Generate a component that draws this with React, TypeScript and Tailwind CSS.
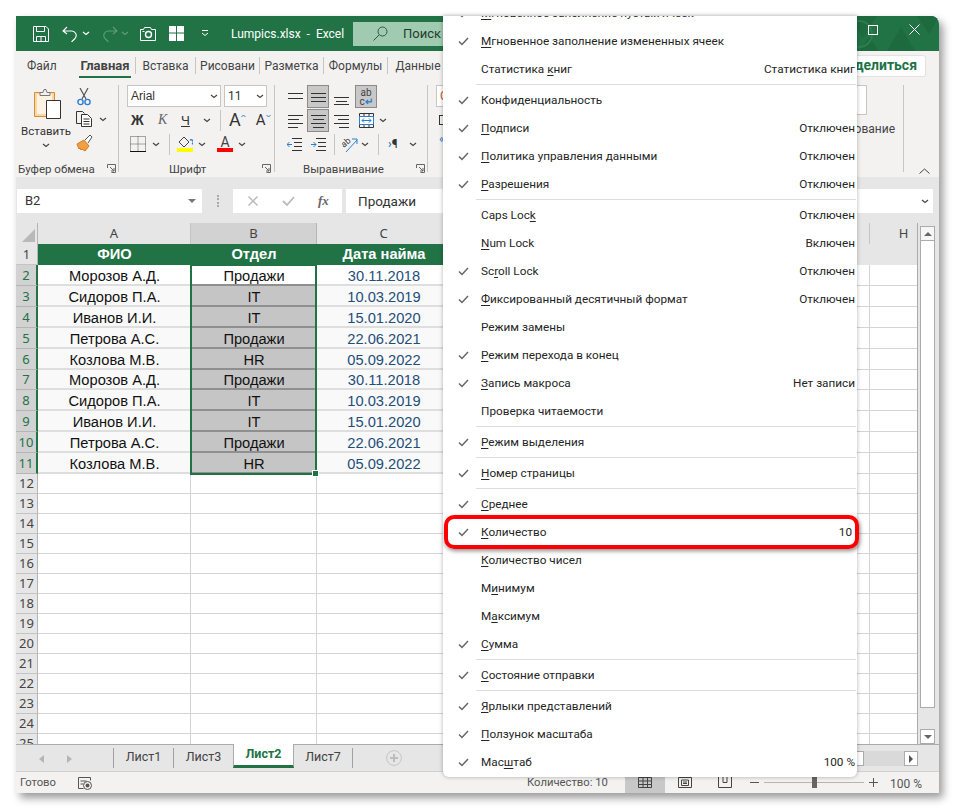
import type { ReactNode } from 'react';

const menuRows: (
  | { sep: true }
  | { sep?: false; on: boolean; a?: string; u?: string; b?: string; val?: string; pr?: string }
)[] = [
  { on: true, u: 'М', b: 'гновенное заполнение пустых ячеек' },
  { on: true, u: 'М', b: 'гновенное заполнение измененных ячеек' },
  { on: false, a: 'Статистика ', u: 'к', b: 'ниг', val: 'Статистика книг' },
  { sep: true },
  { on: true, a: 'Конфиденциальность' },
  { on: true, u: 'П', b: 'одписи', val: 'Отключен' },
  { on: true, u: 'П', b: 'олитика управления данными', val: 'Отключен' },
  { on: true, u: 'Р', b: 'азрешения', val: 'Отключен' },
  { sep: true },
  { on: false, a: 'Caps Loc', u: 'k', val: 'Отключен' },
  { on: false, u: 'N', b: 'um Lock', val: 'Включен' },
  { on: true, a: 'Sc', u: 'r', b: 'oll Lock', val: 'Отключен' },
  { on: true, u: 'Ф', b: 'иксированный десятичный формат', val: 'Отключен' },
  { on: false, a: 'Режим замены' },
  { on: true, u: 'Р', b: 'ежим перехода в конец' },
  { on: true, u: 'З', b: 'апись макроса', val: 'Нет записи' },
  { on: false, a: 'Проверка читаемости' },
  { sep: true },
  { on: true, u: 'Р', b: 'ежим выделения' },
  { sep: true },
  { on: true, u: 'Н', b: 'омер страницы' },
  { sep: true },
  { on: true, u: 'С', b: 'реднее' },
  { on: true, u: 'К', b: 'оличество', val: '10', pr: 'pr-[5px]' },
  { on: false, u: 'К', b: 'оличество чисел' },
  { on: false, a: 'М', u: 'и', b: 'нимум' },
  { on: false, a: 'М', u: 'а', b: 'ксимум' },
  { on: true, u: 'С', b: 'умма' },
  { sep: true },
  { on: true, u: 'С', b: 'остояние отправки' },
  { sep: true },
  { on: true, u: 'Я', b: 'рлыки представлений' },
  { on: true, u: 'П', b: 'олзунок масштаба' },
  { on: true, a: 'Мас', u: 'ш', b: 'таб', val: '100 %' },
];

const people = [
  ['Морозов А.Д.', 'Продажи', '30.11.2018'],
  ['Сидоров П.А.', 'IT', '10.03.2019'],
  ['Иванов И.И.', 'IT', '15.01.2020'],
  ['Петрова А.С.', 'Продажи', '22.06.2021'],
  ['Козлова М.В.', 'HR', '05.09.2022'],
  ['Морозов А.Д.', 'Продажи', '30.11.2018'],
  ['Сидоров П.А.', 'IT', '10.03.2019'],
  ['Иванов И.И.', 'IT', '15.01.2020'],
  ['Петрова А.С.', 'Продажи', '22.06.2021'],
  ['Козлова М.В.', 'HR', '05.09.2022'],
];

const emptyRows = Array.from({ length: 14 }, (_, i) => i + 12);

function Chevron({ className = 'ml-[4px]', color = '#444' }: { className?: string; color?: string }) {
  return (
    <svg width="8" height="5" viewBox="0 0 8 5" className={`block shrink-0 ${className}`}>
      <path d="M1 1l3 2.500L7 1" fill="none" stroke={color} strokeWidth="1.200" />
    </svg>
  );
}

function Lines({ w, stroke = '#333', d }: { w: number; stroke?: string; d: string }) {
  return (
    <svg width={w} height="16" viewBox={`0 0 ${w} 16`} className="block shrink-0">
      <path d={d} fill="none" stroke={stroke} strokeWidth="1" />
    </svg>
  );
}

function AlignCell({ active, children, className = '' }: { active?: boolean; children: ReactNode; className?: string }) {
  return (
    <div
      className={`w-[22px] h-[23px] flex items-center justify-center shrink-0 ${
        active ? 'bg-[#c8c8c8] border border-[#8a8a8a]' : ''
      } ${className}`}
    >
      {children}
    </div>
  );
}

function Launcher({ className = '' }: { className?: string }) {
  return (
    <svg width="9" height="9" viewBox="0 0 9 9" className={`block shrink-0 ${className}`}>
      <path d="M.5 4V.5h8v8H4.500M3 3l4 4M4 7h3V4" fill="none" stroke="#666" strokeWidth="1" />
    </svg>
  );
}

function VSep({ className = '' }: { className?: string }) {
  return <div className={`w-px bg-[#c8c6c4] shrink-0 ${className}`} />;
}

function TitleBar() {
  return (
    <div className="h-[35px] bg-[#217346] flex items-center shrink-0 rounded-tr-lg relative overflow-hidden">
      <svg width="16" height="16" viewBox="0 0 16 16" className="block shrink-0 ml-[17px]">
        <path d="M.5.5h12.500l2.500 2.500v12.500H.5zM3.500.5v5h8v-5M3.500 15.500v-5h9v5M8 11v4.500" fill="none" stroke="#fff" />
      </svg>
      <svg width="16" height="16" viewBox="0 0 16 16" className="block shrink-0 ml-[13px]">
        <path d="M5 1L1 5l4 3M1 5h9a4.500 4.500 0 0 1 3 7.500L9.500 16" fill="none" stroke="#fff" strokeWidth="1.100" />
      </svg>
      <Chevron color="#fff" />
      <svg width="16" height="16" viewBox="0 0 16 16" className="block shrink-0 ml-[12px]">
        <path d="M11 1l4 4-4 3M15 5H6a4.500 4.500 0 0 0-3 7.500L6.500 16" fill="none" stroke="#5f9c7a" strokeWidth="1.100" />
      </svg>
      <Chevron className="ml-[3px]" color="#5f9c7a" />
      <svg width="16" height="14" viewBox="0 0 16 14" className="block shrink-0 ml-[11px]">
        <path d="M.5 2.500h3l1-2h6l1 2h4v11H.5z" fill="none" stroke="#fff" />
        <circle cx="8.500" cy="7.500" r="3" fill="none" stroke="#fff" strokeWidth="1.400" />
        <path d="M2.500 4.500h2" stroke="#fff" />
      </svg>
      <svg width="15" height="15" viewBox="0 0 15 15" className="block shrink-0 ml-[13px]">
        <path d="M0 0h7v6.500H0zM8 0h7v6.500H8zM0 7.500h7V15H0zM8 7.500h7V15H8z" fill="#fff" />
      </svg>
      <svg width="8" height="7" viewBox="0 0 8 7" className="block shrink-0 ml-[17px]">
        <path d="M1 .5h6M1 3l3 2.500L7 3" fill="none" stroke="#fff" />
      </svg>
      <span className="ml-[22px] w-[110px] text-[12px] text-white whitespace-pre">Lumpics.xlsx  -  Excel</span>
      <div className="ml-[12px] h-[24px] w-[300px] bg-[#a0cbb0] flex items-center shrink-0">
        <svg width="15" height="15" viewBox="0 0 15 15" className="block shrink-0 ml-[20px]">
          <circle cx="9.500" cy="5.500" r="4.500" fill="none" stroke="#2d5a40" />
          <path d="M6 9l-5.500 5.500" stroke="#2d5a40" />
        </svg>
        <span className="ml-[15px] text-[13px] text-[#1f3d2c]">Поиск</span>
      </div>
      <div className="absolute right-0 top-0 h-[35px] w-[110px]">
        <svg width="110" height="35" viewBox="0 0 110 35" className="block">
          <path d="M20 0l14 22L48 0zM58 35l14-24 14 24zM88 0l12 18L110 0zM30 35l10-14 10 14z" fill="#1c6a3e" />
          <circle cx="30" cy="18" r="13" fill="none" stroke="#2c7d50" strokeWidth="2" />
        </svg>
      </div>
      <div className="absolute right-[19px] top-[8px] flex items-center gap-[31px]">
        <div className="w-[10px] h-[10px] border border-white" />
        <svg width="11" height="11" viewBox="0 0 11 11" className="block">
          <path d="M.5.5l10 10M10.500.5l-10 10" stroke="#fff" />
        </svg>
      </div>
    </div>
  );
}

function TabsRow() {
  return (
    <div className="h-[29px] bg-[#f3f2f1] flex items-center shrink-0 text-[12px] text-[#444] relative">
      <span className="ml-[11px] w-[52px]">Файл</span>
      <div className="w-[52px] h-[29px] flex items-center justify-center relative font-bold text-[13px] text-[#444]">
        Главная
        <div className="absolute left-0 right-0 bottom-[2px] h-[2px] bg-[#217346]" />
      </div>
      <VSep className="ml-[4px] h-[17px]" />
      <span className="w-[59px] text-center">Вставка</span>
      <VSep className="h-[17px]" />
      <span className="w-[63px] text-center">Рисовани</span>
      <VSep className="h-[17px]" />
      <span className="w-[63px] text-center">Разметка</span>
      <VSep className="h-[17px]" />
      <span className="w-[63px] text-center">Формулы</span>
      <VSep className="h-[17px]" />
      <span className="w-[60px] text-center">Данные</span>
      <div className="ml-auto mr-[13px] w-[100px] h-[22px] bg-white rounded-[3px] border border-[#e3e2e0] flex items-center justify-end pr-[8px] text-[14px] font-bold text-[#217346]">
        Поделиться
      </div>
    </div>
  );
}

function GroupLabel({ text, className }: { text: string; className: string }) {
  return <span className={`absolute bottom-0 text-[11.5px] leading-[16px] text-[#444] ${className}`}>{text}</span>;
}

function Ribbon() {
  return (
    <div className="h-[97px] bg-[#f3f2f1] flex shrink-0 text-[#333]">
      {/* буфер обмена */}
      <div className="w-[102px] relative flex shrink-0">
        <div className="w-[60px] flex flex-col items-center pt-[9px]">
          <svg width="28" height="30" viewBox="0 0 28 30" className="block shrink-0 ml-[4px]">
            <path d="M.5 3.500h20v24H.5z" fill="#f6d9a8" stroke="#e08a2c" />
            <path d="M3 5h15v20H3z" fill="#fdf3e2" />
            <path d="M6 3.500h3l1-3h2l1 3h3v3H6z" fill="#f3f2f1" stroke="#777" />
            <path d="M12.500 11.500h14v18h-14z" fill="#fff" stroke="#333" />
          </svg>
          <span className="mt-[3px] text-[11.5px] leading-[18px] text-[#333] whitespace-nowrap">Вставить</span>
          <Chevron className="mt-[3px]" />
        </div>
        <div className="flex flex-col pt-[8px] ml-[0px]">
          <svg width="14" height="18" viewBox="0 0 14 18" className="block ml-[1px]">
            <path d="M3 0l6 11M11 0L5 11" stroke="#555" strokeWidth="1.200" />
            <circle cx="3.500" cy="14" r="2.600" fill="none" stroke="#2a7fd0" strokeWidth="1.400" />
            <circle cx="10.500" cy="14" r="2.600" fill="none" stroke="#2a7fd0" strokeWidth="1.400" />
          </svg>
          <div className="flex items-center mt-[5px]">
            <svg width="17" height="16" viewBox="0 0 17 16" className="block shrink-0">
              <path d="M5.500 12.500H.5V.5h6l2 2" fill="none" stroke="#333" />
              <path d="M5.500 3.500h6l4 4v8h-10zM7.500 8h6M7.500 10.500h6M7.500 13h6" fill="#fff" stroke="#333" />
            </svg>
            <Chevron className="ml-[6px]" />
          </div>
          <svg width="17" height="17" viewBox="0 0 17 17" className="block mt-[8px]">
            <path d="M1 9l7-4 5 6-4 5-3-2-1 1-1-2-1 1z" fill="#f0a040" stroke="#d9781f" />
            <path d="M9 5l5-5 2 2-4 6" fill="#fff" stroke="#555" />
          </svg>
        </div>
        <GroupLabel text="Буфер обмена" className="left-[2px]" />
        <Launcher className="absolute left-[91px] bottom-[4px]" />
      </div>
      <VSep className="h-[87px] mt-[5px]" />
      {/* шрифт */}
      <div className="w-[155px] relative flex flex-col shrink-0 pt-[5px]">
        <div className="flex ml-[8px]">
          <div className="w-[94px] h-[22px] bg-white border border-[#c6c6c6] flex items-center pl-[3px] font-['Liberation_Sans',Arial,sans-serif] text-[12px]">
            Arial
            <Chevron className="ml-auto mr-[2px]" />
          </div>
          <div className="ml-[3px] w-[43px] h-[22px] bg-white border border-[#c6c6c6] flex items-center pl-[3px] text-[12px]">
            11
            <Chevron className="ml-auto mr-[2px]" />
          </div>
        </div>
        <div className="flex items-center h-[22px] mt-[2px] ml-[12px]">
          <span className="w-[15px] text-[14px] font-extrabold font-['Liberation_Sans',Arial,sans-serif] leading-none">Ж</span>
          <span className="ml-[12px] w-[10px] text-[14px] italic text-[#666] font-['Liberation_Serif',serif] leading-none">К</span>
          <span className="ml-[13px] w-[10px] text-[13px] underline leading-none">Ч</span>
          <Chevron className="ml-[12px]" />
          <VSep className="ml-[9px] h-[21px]" />
          <span className="ml-[8px] text-[18px] leading-none">A</span>
          <svg width="5" height="4" viewBox="0 0 5 4" className="block mb-[8px]">
            <path d="M.5 3l2-2 2 2" fill="none" stroke="#2a7fd0" />
          </svg>
          <span className="ml-[10px] text-[15px] leading-none">A</span>
          <svg width="5" height="4" viewBox="0 0 5 4" className="block mb-[8px]">
            <path d="M.5 1l2 2 2-2" fill="none" stroke="#2a7fd0" />
          </svg>
        </div>
        <div className="flex items-center h-[22px] mt-[2px] ml-[11px]">
          <svg width="16" height="16" viewBox="0 0 16 16" className="block shrink-0">
            <path d="M.5.500h15v15h-15zM8 .5v15M.5 8h15" fill="none" stroke="#555" strokeDasharray="1 1" />
            <path d="M0 15.500h16" stroke="#111" />
          </svg>
          <Chevron className="ml-[6px]" />
          <VSep className="ml-[9px] h-[21px]" />
          <div className="ml-[7px] w-[16px] flex flex-col items-center">
            <svg width="16" height="12" viewBox="0 0 16 12" className="block">
              <path d="M2 6l5-5 5 5-5 5z" fill="none" stroke="#444" />
              <path d="M13 4a2 2 0 0 1 2 4" fill="none" stroke="#2a7fd0" strokeWidth="1.400" />
            </svg>
            <div className="w-[16px] h-[4px] bg-[#ffff00]" />
          </div>
          <Chevron className="ml-[5px]" />
          <div className="ml-[11px] w-[16px] flex flex-col items-center">
            <span className="text-[14px] leading-[12px] h-[12px] text-[#444]">A</span>
            <div className="w-[16px] h-[4px] bg-[#ff0000]" />
          </div>
          <Chevron className="ml-[5px]" />
        </div>
        <GroupLabel text="Шрифт" className="left-[50px]" />
        <Launcher className="absolute left-[143px] bottom-[4px]" />
      </div>
      <VSep className="h-[87px] mt-[5px]" />
      {/* выравнивание */}
      <div className="w-[152px] relative flex flex-col shrink-0 pt-[5px]">
        <div className="flex ml-[9px]">
          <AlignCell><Lines w={15} d="M0 4.500h15M0 9.500h15" /></AlignCell>
          <AlignCell active className="ml-[1px]"><Lines w={15} d="M0 4.500h15M0 8.500h15M0 12.500h15" /></AlignCell>
          <AlignCell className="ml-[1px]"><Lines w={15} d="M0 8.500h15M2 12.500h11M0 15.500h15" /></AlignCell>
          <AlignCell active className="ml-[3px]">
            <span className="text-[10px] leading-[9px] text-[#444] text-center relative">
              ab
              <br />c<span className="text-[#2a7fd0] font-bold">↵</span>
            </span>
          </AlignCell>
        </div>
        <div className="flex ml-[9px] mt-[1px]">
          <AlignCell><Lines w={15} d="M0 2.500h15M0 6.500h11M0 10.500h15M0 14.500h10" /></AlignCell>
          <AlignCell active className="ml-[1px]"><Lines w={15} d="M0 2.500h15M2 6.500h11M0 10.500h15M2 14.500h11" /></AlignCell>
          <AlignCell className="ml-[1px]"><Lines w={15} d="M0 2.500h15M4 6.500h11M0 10.500h15M5 14.500h10" /></AlignCell>
          <AlignCell className="ml-[3px]">
            <svg width="15" height="15" viewBox="0 0 15 15" className="block">
              <path d="M.5.500h14v14H.5zM5 .5v3M10 .5v3M5 11v3.500M10 11v3.500" fill="none" stroke="#333" />
              <path d="M.5 3.500h14v8H.5z" fill="#fff" stroke="#2a7fd0" />
              <path d="M3 7.500h9M5 5.500l-2 2 2 2M10 5.500l2 2-2 2" fill="none" stroke="#2a7fd0" />
            </svg>
          </AlignCell>
          <Chevron className="ml-[2px] self-center" />
        </div>
        <div className="flex items-center h-[22px] mt-[1px] ml-[12px]">
          <svg width="15" height="16" viewBox="0 0 15 16" className="block shrink-0">
            <path d="M5 2.500h10M7 6.500h8M7 10.500h8M5 14.500h10" fill="none" stroke="#333" />
            <path d="M5 8.500H0M2.500 6L0 8.500 2.500 11" fill="none" stroke="#2a7fd0" />
          </svg>
          <span className="ml-[9px]">
            <svg width="15" height="16" viewBox="0 0 15 16" className="block shrink-0">
              <path d="M5 2.500h10M7 6.500h8M7 10.500h8M5 14.500h10" fill="none" stroke="#333" />
              <path d="M0 8.500h5M2.500 6L5 8.500 2.500 11" fill="none" stroke="#2a7fd0" />
            </svg>
          </span>
          <VSep className="ml-[8px] h-[21px]" />
          <svg width="17" height="17" viewBox="0 0 17 17" className="block shrink-0 ml-[7px]">
            <text x="0" y="9" fontSize="9" fill="#444" transform="rotate(-40 5 8)">ab</text>
            <path d="M4 16L15 4M10 3h5v5" fill="none" stroke="#2a7fd0" />
          </svg>
          <Chevron className="ml-[2px]" />
          <VSep className="ml-[9px] h-[21px]" />
          <span className="ml-[9px] w-[16px] text-[12px] leading-none text-[#333]">
            <span className="text-[#2a7fd0] font-bold">›</span>¶
          </span>
          <Chevron className="ml-[5px]" />
        </div>
        <GroupLabel text="Выравнивание" className="left-[28px]" />
        <Launcher className="absolute left-[141px] bottom-[4px]" />
      </div>
      <VSep className="h-[87px] mt-[5px]" />
      {/* число и то, что спрятано под меню */}
      <div className="w-[475px] flex shrink-0 pt-[5px]">
        <div className="ml-[8px] w-[80px] flex flex-col">
          <div className="h-[22px] bg-white border border-[#c6c6c6] pl-[3px] text-[12px] text-[#c25b12] leading-[20px]">О</div>
          <div className="w-[10px] h-[10px] border border-[#333] ml-[3px] mt-[8px]" />
          <span className="ml-[3px] mt-[8px] text-[12px] text-[#2a7fd0] leading-none">«</span>
        </div>
        <div className="ml-auto mr-[8px] flex flex-col items-end">
          <div className="w-[100px] h-[30px] bg-white border border-[#c6c6c6] mr-[28px]" />
          <span className="mt-[5px] text-[12px] text-[#444]">Форматирование</span>
        </div>
      </div>
      <VSep className="h-[87px] mt-[5px]" />
      <div className="flex-1 flex items-end justify-end pr-[9px] pb-[3px]">
        <svg width="11" height="6" viewBox="0 0 11 6" className="block">
          <path d="M.5 5.500l5-4.500 5 4.500" fill="none" stroke="#444" />
        </svg>
      </div>
    </div>
  );
}

function FormulaBar() {
  return (
    <div className="h-[46px] bg-[#e6e6e6] flex pt-[12px] shrink-0 text-[13px] text-[#333]">
      <div className="ml-[1px] w-[185px] h-[24px] bg-white flex items-center pl-[8px]">
        B2
        <svg width="8" height="4" viewBox="0 0 8 4" className="block ml-auto mr-[6px]">
          <path d="M0 0h8L4 4z" fill="#777" />
        </svg>
      </div>
      <div className="ml-[15px] w-[2px] h-[12px] mt-[6px] border-l-2 border-dotted border-[#aaa]" />
      <div className="ml-[14px] w-[109px] h-[24px] bg-white flex items-center">
        <svg width="10" height="10" viewBox="0 0 10 10" className="block ml-[15px]">
          <path d="M.5.500l9 9M9.500.500l-9 9" stroke="#bbb" strokeWidth="1.500" />
        </svg>
        <svg width="13" height="10" viewBox="0 0 13 10" className="block ml-[24px]">
          <path d="M1 5l4 4 7-8" fill="none" stroke="#bbb" strokeWidth="1.800" />
        </svg>
        <span className="ml-[23px] text-[13px] italic font-bold font-['Liberation_Serif',serif] text-[#666]">fx</span>
      </div>
      <div className="ml-[4px] w-[587px] h-[24px] bg-white flex items-center pl-[12px] text-[13.5px]">
        Продажи
        <Chevron className="ml-auto mr-[4px]" />
      </div>
    </div>
  );
}

function RowHead({ n, selected, h }: { n: number; selected?: boolean; h: string }) {
  return (
    <div
      className={`w-[22px] ${h} shrink-0 flex items-center justify-center pt-px text-[13px] border-b font-['Noto_Sans',sans-serif] ${
        selected
          ? 'bg-[#d2d2d2] border-b-[#b5b5b5] border-r-2 border-r-[#217346] text-[#217346]'
          : 'bg-[#e6e6e6] border-b-[#c4c4c4] border-r border-r-[#b5b5b5] text-[#444]'
      }`}
    >
      {n}
    </div>
  );
}

function Sheet() {
  const gridCell = 'border-r border-b border-[#d4d4d4] shrink-0';
  const headCell = 'shrink-0 bg-[#217346] text-white font-bold flex items-center justify-center pb-[2px]';
  return (
    <div className="h-[521px] flex shrink-0 bg-[#e6e6e6]">
      <div className="w-[902px] shrink-0 flex flex-col overflow-hidden border-r border-[#ababab]">
        {/* заголовки столбцов */}
        <div className="flex h-[21px] shrink-0 text-[13px] text-[#444] font-['Noto_Sans',sans-serif]">
          <div className="w-[22px] bg-[#e6e6e6] border-r border-[#b5b5b5] flex items-end justify-end p-[2px]">
            <svg width="13" height="13" viewBox="0 0 13 13" className="block">
              <path d="M13 0v13H0z" fill="#b9b9b9" />
            </svg>
          </div>
          <div className="w-[153px] bg-[#e6e6e6] border-r border-[#c4c4c4] flex items-center justify-center">A</div>
          <div className="w-[126px] bg-[#d2d2d2] border-r border-[#b5b5b5] flex items-center justify-center">B</div>
          <div className="w-[134px] bg-[#e6e6e6] border-r border-[#c4c4c4] flex items-center justify-center">C</div>
          <div className="w-[419px] bg-[#e6e6e6] border-r border-[#c4c4c4]" />
          <div className="w-[47px] bg-[#e6e6e6] flex items-center justify-center pl-[20px]">H</div>
        </div>
        <div className="relative flex-1 overflow-hidden font-['Liberation_Sans',Arial,sans-serif] text-[14.67px] text-[#111]">
          <div className="flex h-[21px]">
            <RowHead n={1} h="h-[21px]" />
            <div className={`w-[153px] ${headCell}`}>ФИО</div>
            <div className={`w-[126px] ${headCell}`}>Отдел</div>
            <div className={`w-[134px] ${headCell}`}>Дата найма</div>
          </div>
          {people.map((p, i) => {
            const h = i === 5 ? 'h-[20px]' : 'h-[21px]';
            return (
              <div key={i} className={`flex ${h}`}>
                <RowHead n={i + 2} selected h={h} />
                <div className={`w-[153px] shrink-0 flex items-center justify-center pt-[2px] border-b-2 border-[#dedede] ${i === 0 ? 'bg-white' : 'bg-[#f9f9f9]'}`}>
                  {p[0]}
                </div>
                <div className={`w-[126px] shrink-0 flex items-center justify-center pt-[2px] border-b-2 ${i === 0 ? 'bg-white border-[#8f8f8f]' : 'bg-[#c5c5c5] border-[#8f8f8f]'}`}>
                  {p[1]}
                </div>
                <div className={`w-[134px] shrink-0 flex items-center justify-center pt-[2px] border-b-2 border-[#dedede] text-[#1f4e79] ${i === 0 ? 'bg-white' : 'bg-[#f9f9f9]'}`}>
                  {p[2]}
                </div>
                <div className={`w-[419px] h-full ${gridCell} bg-white`} />
                <div className="w-[48px] h-full border-b border-[#d4d4d4] bg-white" />
              </div>
            );
          })}
          {emptyRows.map((n) => (
            <div key={n} className="flex h-[20px]">
              <RowHead n={n} h="h-[20px]" />
              <div className={`w-[153px] h-full ${gridCell} bg-white`} />
              <div className={`w-[126px] h-full ${gridCell} bg-white`} />
              <div className={`w-[134px] h-full ${gridCell} bg-white`} />
              <div className={`w-[419px] h-full ${gridCell} bg-white`} />
              <div className="w-[48px] h-full border-b border-[#d4d4d4] bg-white" />
            </div>
          ))}
          {/* рамка выделения */}
          <div className="absolute left-[174px] top-[20px] w-[127px] h-[211px] border-2 border-[#217346] pointer-events-none">
            <div className="absolute -right-[4px] -bottom-[4px] w-[7px] h-[7px] bg-[#217346] border border-white" />
          </div>
        </div>
      </div>
      {/* вертикальная прокрутка */}
      <div className="ml-[2px] w-[15px] flex flex-col pt-[3px] shrink-0">
        <div className="h-[15px] bg-[#f6f6f6] border border-[#ababab] flex items-center justify-center">
          <svg width="8" height="4" viewBox="0 0 8 4" className="block"><path d="M4 0l4 4H0z" fill="#666" /></svg>
        </div>
        <div className="h-[467px] bg-white border-x border-b border-[#ababab]" />
        <div className="flex-1" />
        <div className="h-[15px] bg-white border border-[#ababab] flex items-center justify-center">
          <svg width="8" height="4" viewBox="0 0 8 4" className="block"><path d="M0 0h8L4 4z" fill="#666" /></svg>
        </div>
      </div>
    </div>
  );
}

function SheetTabs() {
  return (
    <div className="h-[28px] bg-[#e6e6e6] border-t border-[#ababab] border-b border-b-[#d0d0d0] flex items-start shrink-0 text-[12.5px] text-[#444]">
      <svg width="5" height="8" viewBox="0 0 5 8" className="block mt-[10px] ml-[23px]"><path d="M5 0v8L0 4z" fill="#b5b5b5" /></svg>
      <svg width="5" height="8" viewBox="0 0 5 8" className="block mt-[10px] ml-[23px]"><path d="M0 0v8l5-4z" fill="#b5b5b5" /></svg>
      <VSep className="ml-[41px] h-[20px] mt-[3px] !bg-[#a0a0a0]" />
      <div className="w-[59px] h-[24px] flex items-center justify-center">Лист1</div>
      <VSep className="h-[20px] mt-[3px] !bg-[#a0a0a0]" />
      <div className="w-[59px] h-[24px] flex items-center justify-center">Лист3</div>
      <div className="w-[61px] h-[24px] bg-white border-x border-[#ababab] border-b-[3px] border-b-[#217346] -mt-px flex items-center justify-center font-bold text-[#217346] shrink-0">
        Лист2
      </div>
      <div className="w-[58px] h-[24px] flex items-center justify-center">Лист7</div>
      <VSep className="h-[20px] mt-[3px] !bg-[#a0a0a0]" />
      <svg width="16" height="16" viewBox="0 0 16 16" className="block ml-[33px] mt-[5px]">
        <circle cx="8" cy="8" r="7.400" fill="none" stroke="#c6c6c6" />
        <path d="M8 4v8M4 8h8" stroke="#bdbdbd" strokeWidth="2" />
      </svg>
      <div className="ml-auto mr-[21px] mt-[6px] h-[15px] w-[100px] flex bg-[#d9d9d9]">
        <div className="w-[46px] bg-white border border-[#ababab]" />
        <div className="ml-auto w-[14px] bg-white border border-[#ababab] flex items-center justify-center">
          <svg width="4" height="8" viewBox="0 0 4 8" className="block"><path d="M0 0l4 4-4 4z" fill="#555" /></svg>
        </div>
      </div>
    </div>
  );
}

function StatusBar() {
  return (
    <div className="h-[21px] bg-[#f3f2f1] flex items-center shrink-0 text-[11.25px] text-[#555]">
      <span className="ml-[4px] w-[36px] pt-[2px]">Готово</span>
      <svg width="14" height="14" viewBox="0 0 14 14" className="block shrink-0 ml-[22px]">
        <path d="M.5 1.500h12v3M.5 1.500v11h5M2.500 5h6M2.500 8h3" fill="none" stroke="#555" />
        <circle cx="9.500" cy="9.500" r="4" fill="none" stroke="#555" />
        <circle cx="9.500" cy="9.500" r="2" fill="#555" />
      </svg>
      <span className="ml-[435px] w-[80px] pt-[2px] text-left whitespace-nowrap">Количество: 10</span>
      <div className="ml-[18px] w-[40px] h-[21px] bg-[#c8c8c8] flex items-center justify-center">
        <svg width="14" height="11" viewBox="0 0 14 11" className="block">
          <path d="M.5.500h13v10H.5zM.5 4h13M.5 7.500h13M5 .5v10M9.500.500v10" fill="none" stroke="#444" />
        </svg>
      </div>
      <div className="w-[40px] flex items-center justify-center">
        <svg width="14" height="11" viewBox="0 0 14 11" className="block">
          <path d="M.5.500h13v10H.5zM3.500 3h7v5.500h-7zM5 5h4M5 6.500h4" fill="none" stroke="#444" />
        </svg>
      </div>
      <div className="w-[40px] flex items-center justify-center">
        <svg width="14" height="11" viewBox="0 0 14 11" className="block">
          <path d="M.5 0v10.500h13V0M5 0v5.500h4V0" fill="none" stroke="#444" />
        </svg>
      </div>
      <div className="ml-[5px] w-[9px] h-px bg-[#555]" />
      <div className="ml-[5px] w-[100px] h-px bg-[#b5b5b5] flex items-center justify-center">
        <div className="w-[5px] h-[11px] bg-[#666] shrink-0" />
      </div>
      <svg width="9" height="9" viewBox="0 0 9 9" className="block ml-[5px] shrink-0">
        <path d="M4.500 0v9M0 4.500h9" stroke="#555" />
      </svg>
      <span className="ml-[12px] pt-[2px] whitespace-nowrap text-[12px]">100 %</span>
    </div>
  );
}

function StatusMenu() {
  return (
    <div className="absolute left-[443px] top-[16px] w-[414px] h-[761px] bg-white rounded-b-md shadow-[0_0_4px_rgba(0,0,0,0.3)] overflow-hidden text-[11.75px] text-[#252525]">
      <div className="-mt-[17px] flex flex-col">
        {menuRows.map((r, i) =>
          r.sep ? (
            <div key={i} className="h-[3px] flex items-center pl-[33px] pr-[1px]">
              <div className="w-full h-px bg-[#dcdcdc]" />
            </div>
          ) : (
            <div key={i} className={`h-[28px] flex items-center shrink-0 ${r.pr ?? 'pr-[2px]'}`}>
              <div className="w-[38px] shrink-0 pl-[15px]">
                {r.on && (
                  <svg width="11" height="9" viewBox="0 0 11 9" className="block">
                    <path d="M1 4.500l3 3 6-6.500" fill="none" stroke="#666" strokeWidth="1.500" />
                  </svg>
                )}
              </div>
              <span className="whitespace-nowrap pt-[2px]">
                {r.a}
                {r.u && <u className="underline-offset-2">{r.u}</u>}
                {r.b}
              </span>
              {r.val && <span className="ml-auto whitespace-nowrap pt-[2px]">{r.val}</span>}
            </div>
          ),
        )}
      </div>
    </div>
  );
}

export default function App() {
  return (
    <div className="relative w-[955px] h-[809px] bg-white overflow-hidden font-['Roboto',sans-serif]">
      <div className="absolute left-[16px] top-[16px] w-[923px] h-[777px] flex flex-col rounded-tr-lg shadow-[4px_5px_8px_rgba(0,0,0,0.4)]">
        <TitleBar />
        <TabsRow />
        <Ribbon />
        <FormulaBar />
        <Sheet />
        <SheetTabs />
        <StatusBar />
      </div>
      <StatusMenu />
      {/* красная рамка поверх меню */}
      <div className="absolute left-[444px] top-[515px] w-[415px] h-[34px] border-4 border-[#ff0000] rounded-[10px] shadow-[1px_2px_4px_rgba(0,0,0,0.45)]" />
    </div>
  );
}
